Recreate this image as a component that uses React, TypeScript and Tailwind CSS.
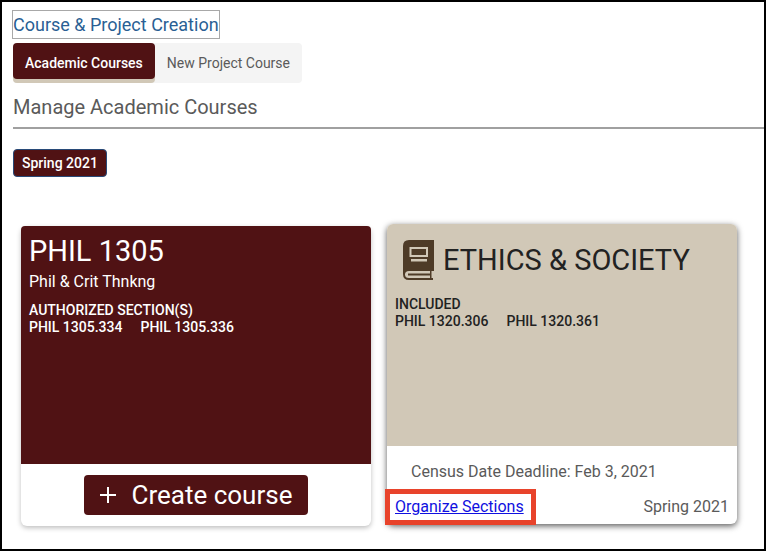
import { ReactNode } from "react";

interface SectionListProps {
  label: string;
  sections: string[];
}

function SectionList({ label, sections }: SectionListProps) {
  return (
    <div className="text-sm leading-[17px] font-medium">
      <h3 className="font-medium">{label}</h3>
      <ul className="flex gap-[18px]">
        {sections.map((section) => (
          <li key={section}>{section}</li>
        ))}
      </ul>
    </div>
  );
}

function BookIcon() {
  return (
    <svg className="h-10 w-8 shrink-0" viewBox="0 0 32 40" fill="none" aria-hidden="true">
      <path
        fill="#4e3b27"
        fillRule="evenodd"
        d="M6 0H31V31H28.500V38H30V40H6Q0 40 0 34V6Q0 0 6 0ZM6.500 7V17H25V7ZM8 19V21.500H24V19ZM6 31Q2 31 2 34.500T6 38H27V31Z"
      />
      <path fill="#4e3b27" d="M8.500 9H23V15H8.500ZM5 33.500H27V35.500H5Z" />
    </svg>
  );
}

function Tab({ active, children }: { active?: boolean; children: ReactNode }) {
  return (
    <button
      type="button"
      role="tab"
      aria-selected={!!active}
      className={
        active
          ? "h-9 rounded-sm bg-[#501214] px-3 pt-1 text-sm font-medium text-white shadow-[0_4px_0_#d1c8b7]"
          : "h-9 px-3 pt-1 text-sm text-[#5a5a5a]"
      }
    >
      {children}
    </button>
  );
}

export default function App() {
  return (
    <main className="min-h-screen border-2 border-black bg-white pt-2 pl-[11px] font-[Roboto,sans-serif] text-[#5a5a5a]">
      <h1 className="-ml-px flex">
        <a href="#" className="border border-[#a8a8a8] text-lg leading-[27px] text-[#2a5f94]">
          Course &amp; Project Creation
        </a>
      </h1>

      {/* Tabs */}
      <div role="tablist" className="mt-1 flex h-10 w-fit rounded-sm bg-[#f4f4f4]">
        <Tab active>Academic Courses</Tab>
        <Tab>New Project Course</Tab>
      </div>

      <h2 className="border-b-2 border-[#a0a0a0] pt-3 pb-2 text-xl leading-6">Manage Academic Courses</h2>

      <button
        type="button"
        className="mt-5 h-7 rounded-sm border border-[#284a78] bg-[#501214] px-2 text-sm font-medium text-white"
      >
        Spring 2021
      </button>

      {/* Course cards */}
      <div className="mt-[49px] mr-[27px] ml-2 grid h-[300px] grid-cols-2 gap-4">
        <article className="flex flex-col rounded-md bg-white shadow-[0_2px_5px_rgba(0,0,0,0.25)]">
          <div className="flex-1 rounded-t-sm bg-[#501214] px-2 pt-2 text-white">
            <h2 className="text-[29px] leading-[34px]">PHIL 1305</h2>
            <p className="mt-1 mb-2.5 text-base leading-5">Phil &amp; Crit Thnkng</p>
            <SectionList label="AUTHORIZED SECTION(S)" sections={["PHIL 1305.334", "PHIL 1305.336"]} />
          </div>
          <div className="flex justify-center py-[11px]">
            <button
              type="button"
              className="flex h-10 items-center gap-4 rounded-sm bg-[#501214] px-4 text-[26px] text-white"
            >
              <svg className="h-4 w-4" viewBox="0 0 16 16" stroke="currentColor" strokeWidth="2" aria-hidden="true">
                <path d="M8 0V16M0 8H16" />
              </svg>
              Create course
            </button>
          </div>
        </article>

        <article className="-mt-0.5 mb-0.5 flex flex-col rounded-md bg-white shadow-[0_2px_6px_rgba(0,0,0,0.65)]">
          <div className="flex-1 rounded-t-md bg-[#d1c8b7] px-2 pt-4 text-[#222]">
            <div className="mb-4 flex items-center gap-2 pl-2">
              <BookIcon />
              <h2 className="text-[29px] leading-10">ETHICS &amp; SOCIETY</h2>
            </div>
            <SectionList label="INCLUDED" sections={["PHIL 1320.306", "PHIL 1320.361"]} />
          </div>
          <p className="px-6 pt-4 pb-[7px] text-base leading-5">Census Date Deadline: Feb 3, 2021</p>
          <div className="-mb-px flex items-center justify-between pr-2 text-base">
            <a
              href="#"
              className="-ml-0.5 border-[5px] border-[#e8432b] pr-[7px] pl-[5px] leading-[26px] text-[#1010e0] underline"
            >
              Organize Sections
            </a>
            <span>Spring 2021</span>
          </div>
        </article>
      </div>
    </main>
  );
}
